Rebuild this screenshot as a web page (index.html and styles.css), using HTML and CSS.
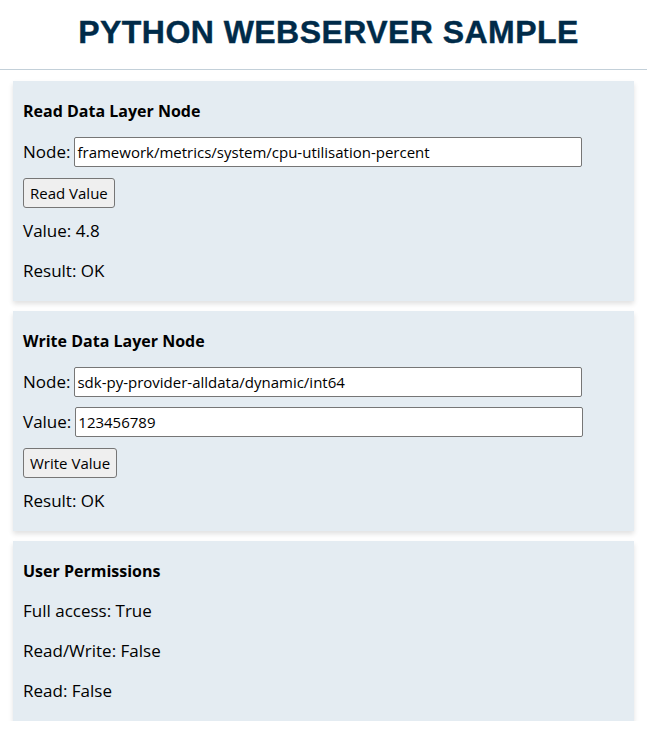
FILE: index.html
```html
<!DOCTYPE html>
<html>
<head>
<meta charset="utf-8">
<title>Python Webserver Sample</title>
<link rel="stylesheet" href="styles.css">
</head>
<body>
<header class="header">
  <h1 class="title">PYTHON WEBSERVER SAMPLE</h1>
</header>
<main class="content">
  <section class="card">
    <h2 class="card-title">Read Data Layer Node</h2>
    <div class="field"><label class="label">Node:</label> <input class="input" type="text" value="framework/metrics/system/cpu-utilisation-percent"></div>
    <div class="btn-row"><button class="btn">Read Value</button></div>
    <p class="line">Value: 4.8</p>
    <p class="line">Result: OK</p>
  </section>
  <section class="card">
    <h2 class="card-title">Write Data Layer Node</h2>
    <div class="field"><label class="label">Node:</label> <input class="input" type="text" value="sdk-py-provider-alldata/dynamic/int64"></div>
    <div class="field"><label class="label">Value:</label> <input class="input" type="text" value="123456789"></div>
    <div class="btn-row"><button class="btn">Write Value</button></div>
    <p class="line">Result: OK</p>
  </section>
  <section class="card">
    <h2 class="card-title">User Permissions</h2>
    <p class="line">Full access: True</p>
    <p class="line">Read/Write: False</p>
    <p class="line">Read: False</p>
  </section>
</main>
</body>
</html>
```
FILE: styles.css
```css
html, body {
  margin: 0;
  padding: 0;
  background: #ffffff;
}
body {
  font-family: "Open Sans", "Noto Sans", sans-serif;
  color: #000;
  font-size: 17px;
}
.header {
  box-sizing: border-box;
  height: 70px;
  padding: 0 0 4px 10px;
  border-bottom: 1px solid #c3d0d9;
  display: flex;
  align-items: center;
  justify-content: center;
}
.title {
  margin: 0;
  font-family: "Liberation Sans", Arial, sans-serif;
  font-weight: bold;
  font-size: 32px;
  color: #002b49;
  letter-spacing: 0.45px;
  -webkit-text-stroke: 0.4px #002b49;
}
.content {
  padding: 11px 13px 0 13px;
  display: flex;
  flex-direction: column;
  gap: 10px;
}
.card {
  background: #e4ecf2;
  box-shadow: 0 3px 5px rgba(0, 0, 0, 0.12);
  padding: 20px 10px;
}
.card-title {
  margin: 0;
  font-size: 16px;
  line-height: 20px;
  font-weight: bold;
}
.field {
  margin-top: 16px;
  display: flex;
  align-items: center;
  gap: 4px;
  line-height: 20px;
}
.field + .field {
  margin-top: 10px;
}
.input {
  box-sizing: border-box;
  width: 508px;
  height: 30px;
  border: 1px solid #767676;
  border-radius: 2px;
  padding: 0 2px;
  font-family: "Open Sans", "Noto Sans", sans-serif;
  font-size: 15px;
  background: #fff;
  color: #000;
}
.btn-row {
  margin-top: 11px;
  line-height: 0;
}
.btn {
  height: 30px;
  padding: 0 6px;
  background: #efefef;
  border: 1px solid #767676;
  border-radius: 3px;
  font-family: "Open Sans", "Noto Sans", sans-serif;
  font-size: 15px;
  color: #000;
}
.line {
  margin: 20px 0 0 0;
  line-height: 20px;
}
.btn-row + .line {
  margin-top: 13px;
}
```
